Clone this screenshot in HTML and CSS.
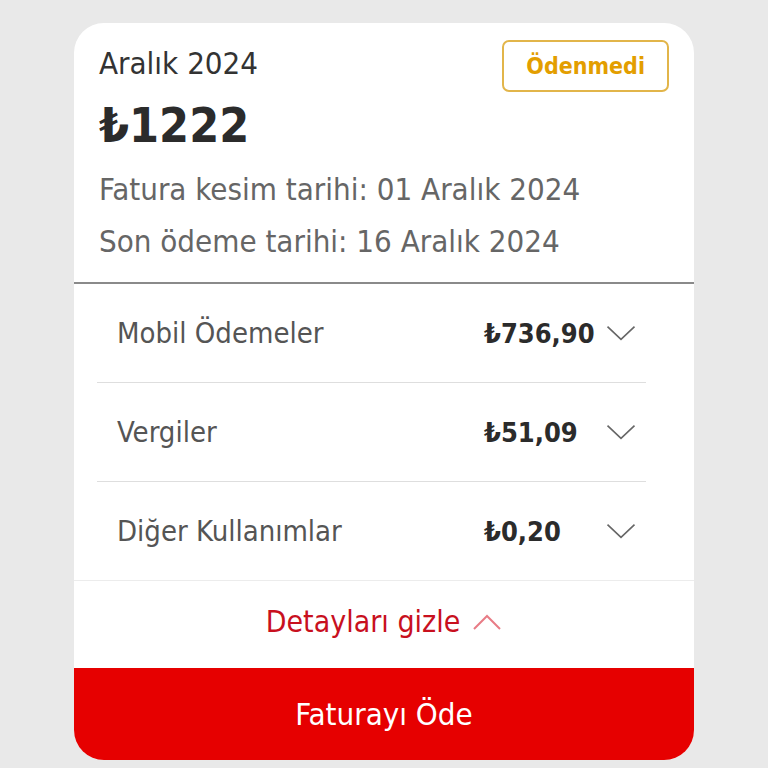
FILE: index.html
```html
<!DOCTYPE html>
<html lang="tr">
<head>
    <meta charset="UTF-8">
    <meta name="viewport" content="width=device-width, initial-scale=1.0">
    <title>Fatura</title>
    <link rel="stylesheet" href="styles.css">
</head>
<body>

<div class="card">
  <!-- fatura özeti -->
  <div class="summary">
    <div class="summary-top">
      <div class="month">Aralık 2024</div>
      <span class="badge">Ödenmedi</span>
    </div>
    <div class="total">₺1222</div>
    <div class="date">Fatura kesim tarihi: 01 Aralık 2024</div>
    <div class="date">Son ödeme tarihi: 16 Aralık 2024</div>
  </div>

  <!-- detay satırları -->
  <div class="details">
    <div class="row">
      <span class="label">Mobil Ödemeler</span>
      <span class="amount">₺736,90</span>
      <svg class="chev" viewBox="0 0 34 20"><path d="M2 3 L17 17 L32 3"/></svg>
    </div>
    <div class="row">
      <span class="label">Vergiler</span>
      <span class="amount">₺51,09</span>
      <svg class="chev" viewBox="0 0 34 20"><path d="M2 3 L17 17 L32 3"/></svg>
    </div>
    <div class="row">
      <span class="label">Diğer Kullanımlar</span>
      <span class="amount">₺0,20</span>
      <svg class="chev" viewBox="0 0 34 20"><path d="M2 3 L17 17 L32 3"/></svg>
    </div>
  </div>

  <a class="toggle" href="#">Detayları gizle
    <svg class="chev-up" viewBox="0 0 30 20"><path d="M2 17 L15 4 L28 17"/></svg>
  </a>

  <button class="pay">Faturayı Öde</button>
</div>

</body>
</html>
```

FILE: styles.css
```css
body {
  margin: 0;
  padding: 23px 0 0;
  background: #e9e9e9;
  font-family: "DejaVu Sans Condensed", "Liberation Sans", sans-serif;
  color: #333;
}

.card {
  width: 620px;
  margin: 0 auto;
  background: #fff;
  border-radius: 30px;
  overflow: hidden;
}

/* üst bölüm */
.summary {
  padding: 16px 25px 15px;
  border-bottom: 2px solid #8a8a8a;
}

.summary-top {
  display: flex;
  justify-content: space-between;
  align-items: flex-start;
}

.month {
  font-size: 31px;
  color: #333;
  margin-top: 6px;
}

.badge {
  border: 2px solid #e2b54a;
  border-radius: 7px;
  color: #e39e00;
  font-weight: bold;
  font-size: 23px;
  padding: 11px 22px;
  margin-top: 1px;
}

.total {
  font-size: 48px;
  font-weight: bold;
  color: #2b2b2b;
  margin: 5px 0 10px;
}

.date {
  font-size: 31px;
  color: #666;
  line-height: 52px;
}

/* detaylar */
.details {
  padding: 0 48px 0 23px;
  border-bottom: 1px solid #ececec;
}

.row {
  display: flex;
  align-items: center;
  height: 98px;
  border-bottom: 1px solid #dedede;
  padding-left: 20px;
}

.row:last-child {
  border-bottom: none;
}

.label {
  flex: 1;
  font-size: 29px;
  color: #555;
}

.amount {
  width: 120px;
  font-size: 27px;
  font-weight: bold;
  color: #2b2b2b;
}

.chev {
  width: 34px;
  height: 18px;
  margin-right: 8px;
}

.chev path {
  fill: none;
  stroke: #666;
  stroke-width: 1.8;
}

.toggle {
  display: flex;
  justify-content: center;
  align-items: center;
  gap: 12px;
  height: 81px;
  padding-bottom: 6px;
  color: #c8101e;
  font-size: 30px;
  text-decoration: none;
}

.chev-up {
  width: 30px;
  height: 20px;
}

.chev-up path {
  fill: none;
  stroke: #e87c86;
  stroke-width: 2;
}

.pay {
  display: block;
  width: 100%;
  height: 92px;
  border: none;
  background: #e60000;
  color: #fff;
  font-family: inherit;
  font-size: 31px;
  cursor: pointer;
}
```
